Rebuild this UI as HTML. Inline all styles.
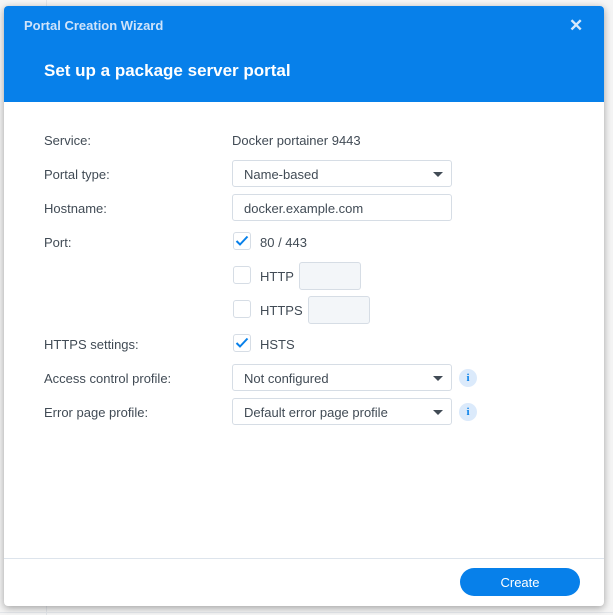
<!DOCTYPE html>
<html><head><style>
*{box-sizing:border-box;margin:0;padding:0}
body{width:613px;height:615px;background:#f5f5f5;position:relative;overflow:hidden;font-family:"Liberation Sans",Arial,sans-serif;font-size:13px;color:#414b55}
.bgl{position:absolute;background:#e3e6ea}
.dlg{position:absolute;left:4px;top:6px;width:600px;height:600px;background:#fff;border-radius:4px;box-shadow:0 2px 8px rgba(0,0,0,.35);overflow:hidden}
.hd{height:96px;background:#0780ea;position:relative}
.t1{position:absolute;left:20px;top:12px;color:#cfe3fa;font-weight:bold;font-size:13px}
.x{position:absolute;left:565px;top:10px;color:#d8e9fb;font-size:17px;font-weight:bold}
.t2{position:absolute;left:40px;top:55px;color:#fff;font-weight:bold;font-size:17px}
.lb{position:absolute;left:40px}
.v{position:absolute;left:228px}
.f{position:absolute;left:228px;width:220px;height:27px;border:1px solid #d6dde5;border-radius:3px;padding-left:11px;line-height:27px}
.ar{position:absolute;right:8px;top:11px;border-left:5px solid transparent;border-right:5px solid transparent;border-top:5px solid #414b55}
.cb{position:absolute;left:229px;width:18px;height:18px;border:1px solid #d6dde5;border-radius:3px}
.cb svg{position:absolute;left:1px;top:1px}
.in{position:absolute;width:62px;height:28px;background:#f3f6f9;border:1px solid #d6dde5;border-radius:3px}
.i{position:absolute;left:455px;width:18px;height:18px;border-radius:50%;background:#dbeafb;color:#0780ea;font-weight:bold;font-size:11px;text-align:center;line-height:18px;font-family:"Liberation Serif",serif}
.ft{position:absolute;left:0;top:552px;width:600px;border-top:1px solid #dde4ec}
.btn{position:absolute;left:456px;top:562px;width:120px;height:28px;background:#0780ea;border-radius:14px;color:#fff;text-align:center;line-height:30px;font-size:13px}
</style></head><body>
<div class="bgl" style="left:46px;top:0;width:1px;height:615px"></div>
<div class="bgl" style="left:0;top:612px;width:613px;height:1px"></div>
<div class="dlg">
<div class="hd"><div class="t1">Portal Creation Wizard</div><div class="x">✕</div><div class="t2">Set up a package server portal</div></div>
<div class="lb" style="top:127px">Service:</div><div class="v" style="top:127px">Docker portainer 9443</div>
<div class="lb" style="top:161px">Portal type:</div><div class="f" style="top:154px">Name-based<div class="ar"></div></div>
<div class="lb" style="top:195px">Hostname:</div><div class="f" style="top:188px">docker.example.com</div>
<div class="lb" style="top:229px">Port:</div>
<div class="cb" style="top:226px"><svg width="14" height="14" viewBox="0 0 14 14"><path d="M1.5 7l3.5 3.5L12.5 2.5" stroke="#0780ea" stroke-width="2" fill="none"/></svg></div><div class="v" style="left:256px;top:229px">80 / 443</div>
<div class="cb" style="top:260px"></div><div class="v" style="left:256px;top:263px">HTTP</div><div class="in" style="left:295px;top:256px"></div>
<div class="cb" style="top:294px"></div><div class="v" style="left:256px;top:297px">HTTPS</div><div class="in" style="left:304px;top:290px"></div>
<div class="lb" style="top:331px">HTTPS settings:</div>
<div class="cb" style="top:328px"><svg width="14" height="14" viewBox="0 0 14 14"><path d="M1.5 7l3.5 3.5L12.5 2.5" stroke="#0780ea" stroke-width="2" fill="none"/></svg></div><div class="v" style="left:256px;top:331px">HSTS</div>
<div class="lb" style="top:365px">Access control profile:</div><div class="f" style="top:358px">Not configured<div class="ar"></div></div><div class="i" style="top:363px">i</div>
<div class="lb" style="top:399px">Error page profile:</div><div class="f" style="top:392px">Default error page profile<div class="ar"></div></div><div class="i" style="top:397px">i</div>
<div class="ft"></div>
<div class="btn">Create</div>
</div>
</body></html>
